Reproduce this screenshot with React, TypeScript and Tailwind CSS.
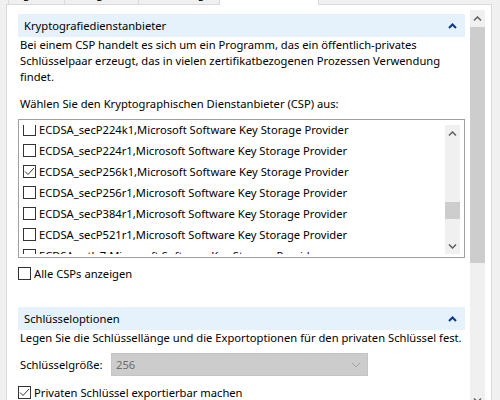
import type { ReactNode } from "react";

const providers = [
  { name: "ECDSA_secP224k1", checked: false },
  { name: "ECDSA_secP224r1", checked: false },
  { name: "ECDSA_secP256k1", checked: true },
  { name: "ECDSA_secP256r1", checked: false },
  { name: "ECDSA_secP384r1", checked: false },
  { name: "ECDSA_secP521r1", checked: false },
  { name: "ECDSA_wtls7", checked: false },
];

function CheckBox({ checked }: Readonly<{ checked?: boolean }>) {
  return (
    <span className="flex h-[13px] w-[13px] shrink-0 items-center justify-center border border-[#333333] bg-white">
      {checked ? (
        <svg width="11" height="11" viewBox="0 0 11 11">
          <path d="M1 5.5 L4 8.5 L10 2" fill="none" stroke="#333333" strokeWidth="1" />
        </svg>
      ) : null}
    </span>
  );
}

function Arrow({ down, color = "#606060" }: Readonly<{ down?: boolean; color?: string }>) {
  return (
    <svg width="9" height="6" viewBox="0 0 9 6">
      <path
        d={down ? "M1 1.5 L4.5 5 L8 1.5" : "M1 4.5 L4.5 1 L8 4.5"}
        fill="none"
        stroke={color}
        strokeWidth="1.5"
      />
    </svg>
  );
}

function SectionHeader({ children }: Readonly<{ children: ReactNode }>) {
  return (
    <div className="flex h-[23px] items-center justify-between bg-[#e5f1fb] pl-[6px] pr-[8px]">
      <span>{children}</span>
      <svg width="9" height="6" viewBox="0 0 9 6">
        <path d="M1 5 L4.5 1.5 L8 5" fill="none" stroke="#0b3a8d" strokeWidth="2" />
      </svg>
    </div>
  );
}

function Tab({ children, width, selected }: Readonly<{ children: ReactNode; width: string; selected?: boolean }>) {
  return (
    <div
      className={
        selected
          ? `relative z-10 -ml-px flex h-[23px] items-center justify-center border border-b-0 border-[#d9d9d9] bg-white ${width}`
          : `-ml-px flex h-[22px] items-center justify-center border border-b-0 border-[#d9d9d9] bg-[#f0f0f0] ${width}`
      }
    >
      {children}
    </div>
  );
}

export default function App() {
  return (
    <div className="relative h-[400px] w-[500px] overflow-hidden bg-[#f0f0f0] font-['Segoe_UI','Noto_Sans',sans-serif] text-[11.2px] leading-4 text-black">
      <div className="-mt-[18px] flex h-[22px] items-start pl-[9px]">
        <Tab width="w-[57px]">Allgemein</Tab>
        <Tab width="w-[75px]">Antragsteller</Tab>
        <Tab width="w-[82px]">Erweiterungen</Tab>
        <Tab width="w-[100px]" selected>
          Privater Schlüssel
        </Tab>
      </div>

      <div className="ml-[6px] flex h-[420px] w-[486px] border border-[#d9d9d9] bg-white pt-[5px]">
        <div className="w-[463px] pl-[11px] pt-[4px]">
          <div className="w-[447px]">
            <SectionHeader>Kryptografiedienstanbieter</SectionHeader>
            <div className="whitespace-nowrap pl-[2px]">
              <div>Bei einem CSP handelt es sich um ein Programm, das ein öffentlich-privates</div>
              <div>Schlüsselpaar erzeugt, das in vielen zertifikatbezogenen Prozessen Verwendung</div>
              <div>findet.</div>
            </div>
            <div className="mt-[11px] whitespace-nowrap pl-[2px]">
              Wählen Sie den Kryptographischen Dienstanbieter (CSP) aus:
            </div>

            <div className="mt-[7px] flex h-[139px] w-[447px] border border-[#a0a0a0] pb-[3px] pr-[4px] pt-[5px]">
              <div className="flex-1 overflow-hidden">
                <div className="-mt-[6px]">
                  {providers.map((p) => (
                    <div key={p.name} className="flex h-[21px] items-center gap-[3px] whitespace-nowrap pl-[4px]">
                      <CheckBox checked={p.checked} />
                      <span>{p.name},Microsoft Software Key Storage Provider</span>
                    </div>
                  ))}
                </div>
              </div>
              <div className="flex w-[15px] flex-col bg-[#f0f0f0]">
                <div className="flex h-[17px] items-center justify-center">
                  <Arrow />
                </div>
                <div className="flex-1">
                  <div className="mt-[60px] h-[17px] bg-[#cdcdcd]" />
                </div>
                <div className="flex h-[17px] items-center justify-center">
                  <Arrow down />
                </div>
              </div>
            </div>

            <div className="mt-[9px] flex h-[13px] items-center gap-[3px]">
              <CheckBox />
              <span>Alle CSPs anzeigen</span>
            </div>

            <div className="mt-[27px]">
              <SectionHeader>Schlüsseloptionen</SectionHeader>
            </div>
            <div className="whitespace-nowrap pl-[2px]">
              Legen Sie die Schlüssellänge und die Exportoptionen für den privaten Schlüssel fest.
            </div>
            <div className="mt-[7px] flex items-center pl-[2px]">
              <span className="w-[91px]">Schlüsselgröße:</span>
              <div className="flex h-[23px] w-[257px] items-center justify-between border border-[#c4c4c4] bg-[#cccccc] pl-[4px] pr-[6px] text-[#6d6d6d]">
                <span>256</span>
                <svg width="10" height="6" viewBox="0 0 10 6">
                  <path d="M1 1 L5 5 L9 1" fill="none" stroke="#a3a3a3" strokeWidth="1" />
                </svg>
              </div>
            </div>
            <div className="mt-[10px] flex h-[13px] items-center gap-[3px]">
              <CheckBox checked />
              <span>Privaten Schlüssel exportierbar machen</span>
            </div>
          </div>
        </div>

        <div className="flex h-[398px] w-[15px] flex-col bg-[#f0f0f0]">
          <div className="flex h-[17px] items-center justify-center">
            <Arrow />
          </div>
          <div className="h-[236px] bg-[#cdcdcd]" />
          <div className="flex-1" />
          <div className="flex h-[17px] items-center justify-center">
            <Arrow down />
          </div>
        </div>
      </div>
    </div>
  );
}
